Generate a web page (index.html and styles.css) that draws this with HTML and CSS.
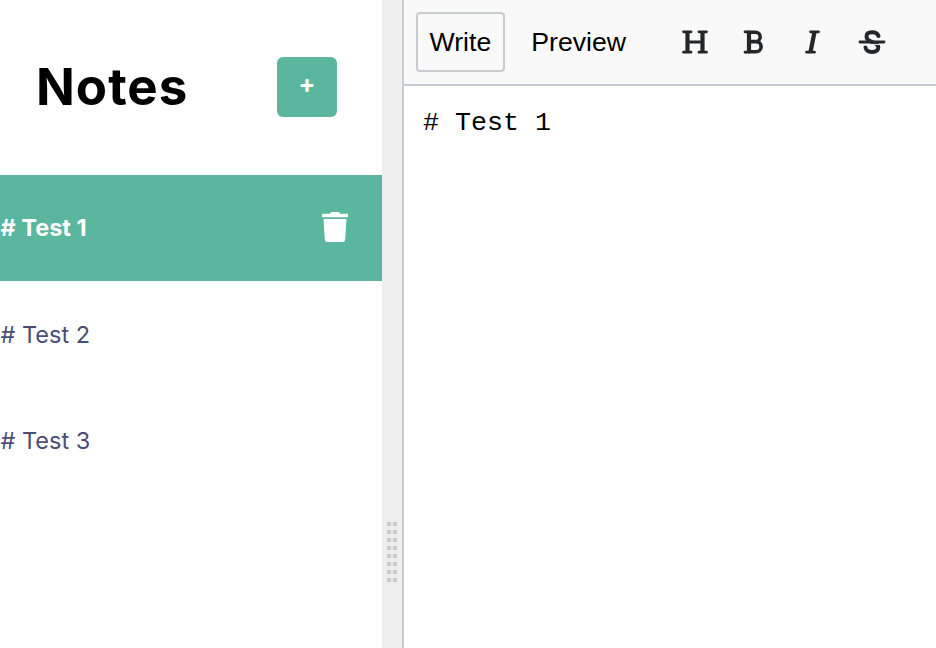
FILE: index.html
```html
<!DOCTYPE html>
<html lang="en">
<head>
<meta charset="utf-8">
<title>Notes</title>
<link rel="stylesheet" href="styles.css">
</head>
<body>
<main class="app">
  <aside class="sidebar">
    <header class="sidebar-header">
      <h1><span class="title">Notes</span></h1>
      <button class="new-note">+</button>
    </header>
    <div class="note selected"><span class="note-text">#&nbsp;Test 1</span>
      <svg class="trash" viewBox="0 0 28 32"><path fill="#fff" d="M1 2.700h8l1-1.700h8l1 1.700h8v3.500H1zM2.500 8h23l-1.300 20.500q-.2 2.500-2.200 2.500h-16q-2 0-2.200-2.500z"/></svg>
    </div>
    <div class="note"><span class="note-text">#&nbsp;Test 2</span></div>
    <div class="note"><span class="note-text">#&nbsp;Test 3</span></div>
  </aside>
  <div class="gutter"><div class="grip"><i></i><i></i><i></i><i></i><i></i><i></i><i></i><i></i><i></i><i></i><i></i><i></i><i></i><i></i><i></i><i></i></div></div>
  <section class="editor">
    <div class="toolbar">
      <button class="tab active">Write</button>
      <button class="tab">Preview</button>
      <div class="tools">
        <svg viewBox="0 0 30 30"><path d="M3.500 4.800h7.500M19 4.800h7.500M3.500 25.200h7.500M19 25.200h7.500"/><path class="stem" d="M7.500 5v20M22.500 5v20"/><path d="M8 15h14"/></svg>
        <svg viewBox="0 0 30 30"><path d="M6 4.800H10M6 25.200H10"/><path class="stem" d="M10 5v20"/><path class="bowl" d="M10 5.200h6.500a4.700 4.700 0 0 1 0 9.400H10M16 14.600h1a5.100 5.100 0 0 1 0 10.200H10"/></svg>
        <svg viewBox="0 0 30 30"><path d="M12.500 4.800h8M8.500 25.200h8"/><path class="stem" d="M16.500 5l-4 20"/></svg>
        <svg viewBox="0 0 30 30"><path class="curve" d="M21.500 9C20.500 6.300 18 5.200 15 5.200c-3.500 0-5.500 1.700-5.500 4.400C9.500 12.500 12 14 15 15c4 1.200 6.300 2.500 6.300 5.300S19 24.900 15 24.900c-3.500 0-6-1.500-6.500-4.400"/><path class="cut" d="M3 17.400h24"/><path d="M3 15h24"/></svg>
      </div>
    </div>
    <div class="source"># Test 1</div>
  </section>
</main>
</body>
</html>
```
FILE: styles.css
```css
* { box-sizing: border-box; }
body { margin: 0; background: #fff; overflow: hidden; }
button { margin: 0; padding: 0; background: none; border: 0; }
.app { display: flex; width: 936px; height: 648px; }
.sidebar { width: 382px; font-family: Inter, sans-serif; }
.sidebar-header { display: flex; justify-content: space-between; align-items: center; height: 175px; padding: 0 45px 2px 36px; }
h1 { margin: 0; font-size: 51px; line-height: 60px; font-weight: 700; letter-spacing: 1px; }
.new-note { width: 60px; height: 60px; padding-bottom: 6px; border-radius: 6px; background: #5ab69d; color: #fff; font: 700 25px/54px Inter, sans-serif; }
.note { display: flex; align-items: center; justify-content: space-between; height: 106px; padding: 0 33px 0 0.500px; color: #4a4e74; font-size: 23.500px; }
.selected { background: #5ab69d; color: #fff; font-weight: 700; }
.selected .note-text { margin-bottom: 2px; }
.trash { width: 28px; height: 32px; margin-bottom: 2px; }
.gutter { display: flex; justify-content: center; width: 20px; padding-top: 522px; background: #eee; }
.grip { display: grid; grid-template-columns: 4px 4px; grid-auto-rows: 4px; gap: 4px 2px; height: 60px; }
.grip i { background: #ccc; }
.editor { flex: 1; border-left: 2px solid #c8ccd0; }
.toolbar { display: flex; align-items: center; height: 86px; padding: 0 0 0 12px; background: #f9f9f9; border-bottom: 2px solid #c8ccd0; }
.tab { height: 60px; padding: 0 11.500px; border: 2px solid transparent; border-radius: 4px; color: #000; font: 26.67px "Liberation Sans", Arial, sans-serif; }
.active { border-color: #c8ccd0; }
.tab + .tab { margin-left: 13px; }
.tools { display: flex; gap: 29px; margin-left: 40.500px; }
.tools svg { width: 30px; height: 30px; fill: none; stroke: #242729; stroke-width: 2.800; stroke-linecap: round; stroke-linejoin: round; }
.tools .stem { stroke-width: 4.200; stroke-linecap: butt; }
.tools .bowl { stroke-width: 3.600; }
.tools .curve { stroke-width: 4; }
.tools .cut { stroke: #f9f9f9; stroke-width: 1; }
.source { padding: 21px 19px; color: #000; font: 26.67px/32px "Courier New", "Liberation Mono", monospace; }
```
